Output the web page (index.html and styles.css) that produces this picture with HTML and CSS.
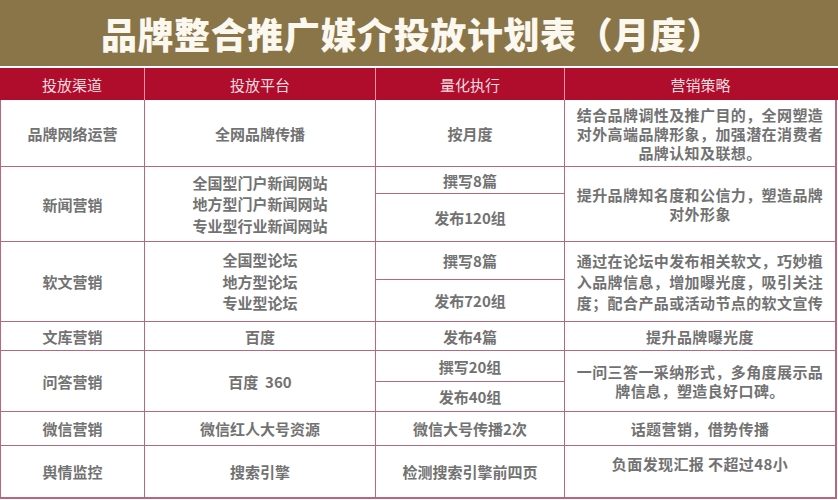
FILE: index.html
```html
<!DOCTYPE html>
<html lang="zh-CN">
<head>
<meta charset="utf-8">
<title>品牌整合推广媒介投放计划表（月度）</title>
<link rel="stylesheet" href="styles.css">
</head>
<body>
<div class="page">
  <div class="title">品牌整合推广媒介投放计划表（月度）</div>
  <div class="head">
    <div class="hcell">投放渠道</div>
    <div class="hcell">投放平台</div>
    <div class="hcell">量化执行</div>
    <div class="hcell">营销策略</div>
  </div>
  <div class="body">
    <div class="cell">品牌网络运营</div>
    <div class="cell">全网品牌传播</div>
    <div class="cell">按月度</div>
    <div class="cell strat">结合品牌调性及推广目的，全网塑造<br>对外高端品牌形象，加强潜在消费者<br>品牌认知及联想。</div>

    <div class="cell span2">新闻营销</div>
    <div class="cell span2 multi">全国型门户新闻网站<br>地方型门户新闻网站<br>专业型行业新闻网站</div>
    <div class="cell">撰写8篇</div>
    <div class="cell span2 strat">提升品牌知名度和公信力，塑造品牌<br>对外形象</div>
    <div class="cell">发布120组</div>

    <div class="cell span2">软文营销</div>
    <div class="cell span2 multi">全国型论坛<br>地方型论坛<br>专业型论坛</div>
    <div class="cell">撰写8篇</div>
    <div class="cell span2 strat wide">通过在论坛中发布相关软文，巧妙植<br>入品牌信息，增加曝光度，吸引关注<br>度；配合产品或活动节点的软文宣传</div>
    <div class="cell">发布720组</div>

    <div class="cell">文库营销</div>
    <div class="cell">百度</div>
    <div class="cell">发布4篇</div>
    <div class="cell strat">提升品牌曝光度</div>

    <div class="cell span2">问答营销</div>
    <div class="cell span2">百度&nbsp;&nbsp;360</div>
    <div class="cell">撰写20组</div>
    <div class="cell span2 strat">一问三答一采纳形式，多角度展示品<br>牌信息，塑造良好口碑。</div>
    <div class="cell">发布40组</div>

    <div class="cell">微信营销</div>
    <div class="cell">微信红人大号资源</div>
    <div class="cell">微信大号传播2次</div>
    <div class="cell strat">话题营销，借势传播</div>

    <div class="cell">舆情监控</div>
    <div class="cell">搜索引擎</div>
    <div class="cell">检测搜索引擎前四页</div>
    <div class="cell strat top">负面发现汇报 不超过48小</div>
  </div>
</div>
</body>
</html>
```

FILE: styles.css
```css
html, body {
  margin: 0;
  padding: 0;
  background: #ffffff;
}

.page {
  width: 838px;
  height: 500px;
  background: #ffffff;
  font-family: "Noto Sans CJK SC", "Noto Sans", "Liberation Sans", sans-serif;
}

.title {
  height: 66px;
  margin-bottom: 2px;
  background: #8a7548;
  color: #fbf8f0;
  font-size: 36px;
  font-weight: 900;
  letter-spacing: 0.6px;
  line-height: 66px;
  text-align: center;
  padding-right: 14px;
  box-sizing: border-box;
}

.head {
  display: grid;
  grid-template-columns: 144px 231px 189px 272px;
  height: 32px;
  background: #b00c2b;
}

.hcell {
  display: flex;
  align-items: center;
  justify-content: center;
  color: #f6dde0;
  font-size: 15px;
}

.hcell + .hcell {
  border-left: 1px solid #ec93a3;
}

.body {
  display: grid;
  grid-template-columns: 143px 230px 188px 270px;
  grid-template-rows: 66px 26px 47px 37px 41px 28px 30px 29px 33px 51px;
  gap: 1px;
  padding: 0 2px 2px 1px;
  width: 837px;
  box-sizing: border-box;
  background: #b8687e;
}

.cell {
  background: #ffffff;
  display: flex;
  align-items: center;
  justify-content: center;
  text-align: center;
  color: #727272;
  font-size: 15px;
  font-weight: 700;
  line-height: 19px;
}

.span2 {
  grid-row: span 2;
}

.multi {
  line-height: 21.5px;
}

.strat {
  font-size: 15px;
  letter-spacing: 0.4px;
  line-height: 19px;
}

.strat.wide {
  line-height: 21px;
}

.strat.top {
  align-items: flex-start;
  padding-top: 8px;
}
```
